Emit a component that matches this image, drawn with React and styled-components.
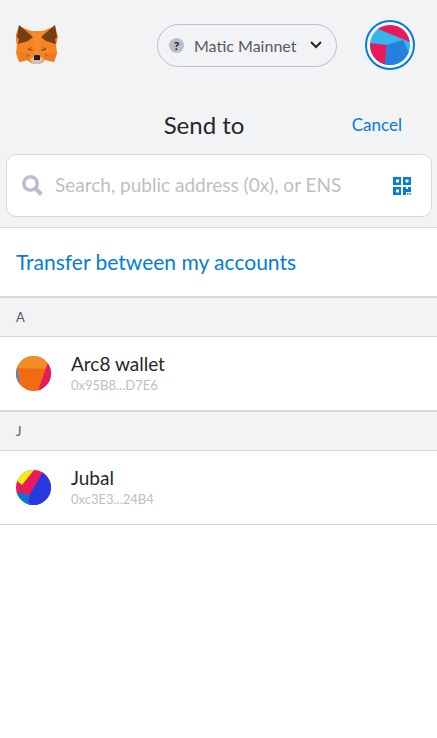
import React from "react";
import styled, { createGlobalStyle } from "styled-components";

const GlobalStyle = createGlobalStyle`
  * { box-sizing: border-box; }
  body {
    margin: 0;
    background: #fff;
    color: #24272a;
    font-family: Lato, "Open Sans", sans-serif;
  }
  button, input { font: inherit; color: inherit; }
  h1, h2 { margin: 0; padding: 0; font-weight: 400; }
`;

const Top = styled.header`
  background: #f2f3f4;
  border-bottom: 1px solid #d6d9dc;
  padding: 20px 5px 10px 6px;
`;

const AppBar = styled.div`
  display: flex;
  align-items: center;
  height: 50px;
  padding: 0 17px 0 10px;
`;

const LogoButton = styled.button`
  display: flex;
  margin-right: auto;
  padding: 0;
  border: 0;
  background: none;
`;

const NetworkButton = styled.button`
  display: flex;
  align-items: center;
  width: 180px;
  height: 43px;
  margin-right: 28px;
  padding: 0 14px 0 11px;
  border: 1px solid #bbbecc;
  border-radius: 22px;
  background: none;
  color: #535a61;
  font-size: 16px;
  white-space: nowrap;
`;

const NetworkName = styled.span`
  flex: 1;
  padding-left: 10px;
  text-align: left;
`;

const QuestionDot = styled.span`
  display: grid;
  place-items: center;
  width: 15px;
  height: 15px;
  border-radius: 50%;
  background: #bbbecc;
  color: #24272a;
  font-size: 12px;
  font-weight: 900;
`;

const AccountButton = styled.button`
  display: grid;
  place-items: center;
  width: 50px;
  height: 50px;
  padding: 0;
  border: 2px solid #037dd6;
  border-radius: 50%;
  background: #f7fafc;
`;

const TitleBar = styled.div`
  display: grid;
  grid-template-columns: 1fr auto 1fr;
  align-items: center;
  height: 84px;
  padding: 26px 30px 0 0;
`;

const Title = styled.h1`
  grid-column: 2;
  font-size: 24px;
  line-height: 32px;
`;

const CancelButton = styled.button`
  justify-self: end;
  padding: 0;
  border: 0;
  background: none;
  color: #037dd6;
  font-size: 17px;
  line-height: 22px;
`;

const SearchBox = styled.div`
  display: flex;
  align-items: center;
  height: 63px;
  padding: 0 19px 0 15px;
  border: 1px solid #d6d9dc;
  border-radius: 10px;
  background: #fff;
`;

const SearchInput = styled.input`
  flex: 1;
  min-width: 0;
  margin: 0 8px 0 12px;
  padding: 0 0 2px;
  border: 0;
  outline: 0;
  background: none;
  font-size: 19px;
  line-height: 26px;
  &::placeholder { color: #bbc0c5; opacity: 1; }
`;

const ScanButton = styled.button`
  display: flex;
  padding: 0;
  border: 0;
  background: none;
`;

const TransferButton = styled.button`
  display: block;
  width: 100%;
  height: 69px;
  padding: 0 16px 2px;
  border: 0;
  border-bottom: 1px solid #d6d9dc;
  background: #fff;
  color: #037dd6;
  font-size: 21px;
  text-align: left;
`;

const GroupLabel = styled.h2`
  height: 40px;
  padding: 0 16px;
  border: solid #d6d9dc;
  border-width: 1px 0;
  background: #f2f3f4;
  color: #535a61;
  font-size: 13px;
  line-height: 39px;
`;

const ContactRow = styled.button`
  display: flex;
  align-items: center;
  gap: 20px;
  width: 100%;
  height: 74px;
  padding: 0 16px;
  border: 0;
  border-bottom: 1px solid #d6d9dc;
  background: #fff;
  text-align: left;
`;

const ContactText = styled.span`
  display: flex;
  flex-direction: column;
  padding-bottom: 2px;
`;

const ContactName = styled.span`
  font-size: 19px;
  line-height: 24px;
`;

const ContactAddress = styled.span`
  color: #bbc0c5;
  font-size: 13px;
  line-height: 18px;
`;

const Round = styled.svg`
  display: block;
  border-radius: 50%;
`;

function Fox() {
  return (
    <svg width="42" height="40" viewBox="0 0 42 40" aria-hidden="true">
      <path d="M3 1 15 6h12l12-5 3 11-2 8 1 8-3 9-9-2-3 3-3 1h-5l-3-1-4-3-8 2-3-9 1-8-2-8z" fill="#f5841f" />
      <path d="M1 28h11l2 5-2 2-8 2zM41 28H30l-2 5 2 2 8 2z" fill="#ee7c22" />
      <path d="M15 6h12l-3 15-1 9h-4l-1-9z" fill="#f68b2c" />
      <path d="M3 0 17 12 12 16 2 19 3 14 1 12zM39 0 25 12l5 4 10 3-1-5 2-2z" fill="#763d16" />
      <path d="m12 23 4 1 1 2-5-1zM30 23l-4 1-1 2 5-1z" fill="#985125" />
      <path d="m14 21 2 2M28 21l-2 2M10 31l3-2-1 3M32 31l-3-2 1 3" fill="none" stroke="#b3652b" />
      <path d="m14 34 4-2h6l4 2-3 4-3 1h-3l-3-1z" fill="#d7c1b3" />
      <path d="m18 31 1-1h4l1 1v4h-6z" fill="#211f2d" />
    </svg>
  );
}

function AccountArt() {
  return (
    <Round width="40" height="40" viewBox="0 0 40 40" aria-hidden="true">
      <path d="M0 0h40v40H0z" fill="#34b5ec" />
      <path d="M8 4 40 17V0H8z" fill="#e91a5b" />
      <path d="M0 18 17 20l-2 20H0z" fill="#e91a5b" />
      <path d="m17 20 16-5 7 15v10H15z" fill="#2481dd" />
    </Round>
  );
}

function ArcArt() {
  return (
    <Round width="35" height="35" viewBox="0 0 35 35" aria-hidden="true">
      <path d="M0 0h35v35H0z" fill="#f06b12" />
      <path d="M0 0h35v13L0 12z" fill="#ef8d27" />
      <path d="M32 6 22 35h13V6z" fill="#e91a5b" />
      <path d="M0 9h1l2 18H0z" fill="#2695df" />
    </Round>
  );
}

function JubalArt() {
  return (
    <Round width="35" height="35" viewBox="0 0 35 35" aria-hidden="true">
      <path d="M0 0h35v35H0z" fill="#e91a5b" />
      <path d="M0 10 6 15 18 0H0z" fill="#f1ef0b" />
      <path d="m27 2-13 22-3 11h24V2z" fill="#2539df" />
      <path d="m0 22 14 3-2 6 4 4H0z" fill="#0878d8" />
    </Round>
  );
}

function SearchIcon() {
  return (
    <svg width="21" height="21" viewBox="0 0 21 21" fill="none" stroke="#bbbecc" aria-hidden="true">
      <circle cx="8.5" cy="8.5" r="6.7" strokeWidth="3.6" />
      <path d="m13.5 13.5 6 6" strokeWidth="4" />
    </svg>
  );
}

function ScanIcon() {
  return (
    <svg width="19" height="18" viewBox="0 0 19 18" fill="#037dd6" aria-hidden="true">
      <path fillRule="evenodd" d="M0 0h8v8H0zM3 2.500v3h3v-3zM10 0h8v8h-8zM12.500 2.500v3h3v-3zM0 10h8v8H0zM3 12.500v3h3v-3z" />
      <path d="M10 10h3v2h2v-2h3v5h-5v3h-3zM14 16h1.500v1.500H14zM16.500 16H18v1.500h-1.500z" />
    </svg>
  );
}

const groups = [
  { letter: "A", name: "Arc8 wallet", address: "0x95B8...D7E6", Art: ArcArt },
  { letter: "J", name: "Jubal", address: "0xc3E3...24B4", Art: JubalArt },
];

export default function App() {
  return (
    <>
      <GlobalStyle />
      <Top>
        <AppBar>
          <LogoButton aria-label="Home"><Fox /></LogoButton>
          <NetworkButton>
            <QuestionDot>?</QuestionDot>
            <NetworkName>Matic Mainnet</NetworkName>
            <svg width="12" height="8" viewBox="0 0 12 8" fill="none" stroke="#24272a" strokeWidth="2" aria-hidden="true">
              <path d="m1 1 5 5 5-5" />
            </svg>
          </NetworkButton>
          <AccountButton aria-label="Account menu"><AccountArt /></AccountButton>
        </AppBar>
        <TitleBar>
          <Title>Send to</Title>
          <CancelButton>Cancel</CancelButton>
        </TitleBar>
        <SearchBox>
          <SearchIcon />
          <SearchInput aria-label="Recipient" placeholder="Search, public address (0x), or ENS" />
          <ScanButton aria-label="Scan QR code"><ScanIcon /></ScanButton>
        </SearchBox>
      </Top>
      <main>
        <TransferButton>Transfer between my accounts</TransferButton>
        {groups.map(({ letter, name, address, Art }) => (
          <section key={letter}>
            <GroupLabel>{letter}</GroupLabel>
            <ContactRow>
              <Art />
              <ContactText>
                <ContactName>{name}</ContactName>
                <ContactAddress>{address}</ContactAddress>
              </ContactText>
            </ContactRow>
          </section>
        ))}
      </main>
    </>
  );
}
